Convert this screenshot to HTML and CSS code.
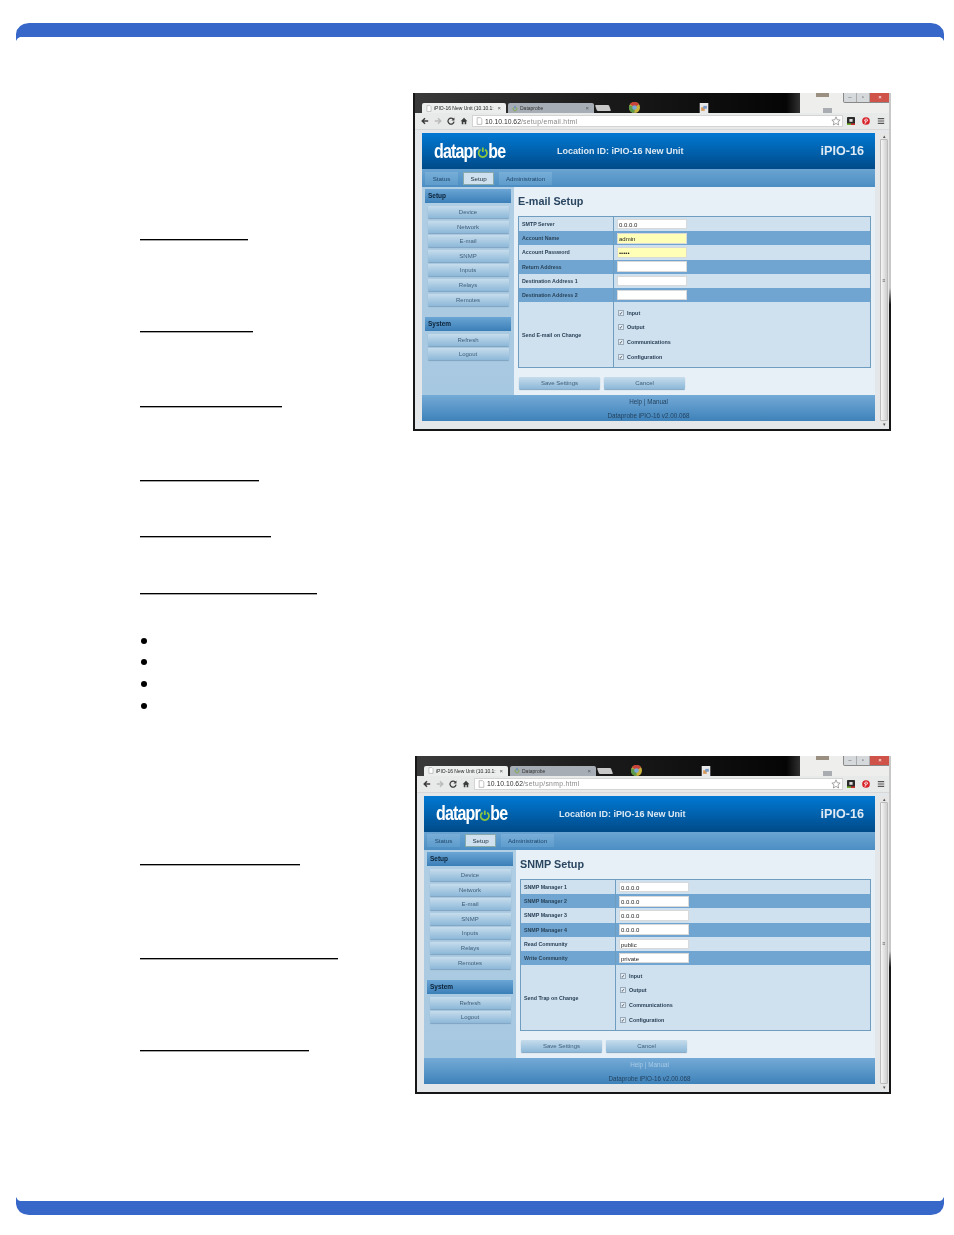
FILE: index.html
```html
<!DOCTYPE html>
<html lang="en">
<head>
<meta charset="utf-8">
<title>iPIO-16 Setup</title>
<link rel="stylesheet" href="styles.css">
</head>
<body>
<svg class="defs" width="0" height="0" aria-hidden="true">
  <symbol id="ic-back" viewBox="0 0 10 10"><path d="M9 5H2M5 1.500 1.500 5 5 8.500" fill="none" stroke="currentColor" stroke-width="1.800"/></symbol>
  <symbol id="ic-reload" viewBox="0 0 10 10"><path d="M8.300 3.200A3.800 3.800 0 1 0 8.800 5.800" fill="none" stroke="currentColor" stroke-width="1.600"/><path d="M9.300 .6V4.400H5.600Z" fill="currentColor"/></symbol>
  <symbol id="ic-home" viewBox="0 0 10 10"><path d="M5 1 .8 5.200H2.200V9.200H4.200V6.400H5.800V9.200H7.800V5.200H9.200Z" fill="currentColor"/></symbol>
  <symbol id="ic-page" viewBox="0 0 10 12"><path d="M1.500 1H6.500L8.500 3V11H1.500Z" fill="#fff" stroke="#999" stroke-width=".9"/></symbol>
  <symbol id="ic-star" viewBox="0 0 12 12"><path d="M6 1 7.500 4.500 11 4.900 8.400 7.200 9.200 10.800 6 8.900 2.800 10.800 3.600 7.200 1 4.900 4.500 4.500Z" fill="#fff" stroke="#888" stroke-width=".9"/></symbol>
  <symbol id="ic-ext" viewBox="0 0 10 10"><rect width="10" height="10" rx="1" fill="#2b2b2b"/><rect x="3" y="2.500" width="4" height="3.500" fill="#ddd"/><rect y="8" width="5" height="2" fill="#6fae2c"/><rect x="5" y="8" width="5" height="2" fill="#c9302c"/></symbol>
  <symbol id="ic-pin" viewBox="0 0 10 10"><circle cx="5" cy="5" r="4.800" fill="#d8232a"/><path d="M3.700 8.500 5 3.800M3.300 5.200C2.600 3 5 1.800 6.400 2.800 7.800 4 6.600 6.600 4.800 5.800" fill="none" stroke="#fff" stroke-width="1"/></symbol>
  <symbol id="ic-menu" viewBox="0 0 10 10"><path d="M1 2H9M1 5H9M1 8H9" stroke="#555" stroke-width="1.500"/></symbol>
  <symbol id="ic-power" viewBox="0 0 12 12" preserveAspectRatio="none"><path d="M3.600 2.700A4.500 4.500 0 1 0 8.400 2.700" fill="none" stroke="#8cc63f" stroke-width="1.900"/><path d="M6 .5V5.500" stroke="#8cc63f" stroke-width="1.900"/></symbol>
  <symbol id="ic-favicon" viewBox="0 0 10 10"><path d="M3 3.200A3.200 3.200 0 1 0 7 3.200" fill="none" stroke="#7ba83a" stroke-width="1.400"/><path d="M5 .5V5" stroke="#3a7cc0" stroke-width="1.400"/></symbol>
  <symbol id="ic-chrome" viewBox="0 0 12 12"><circle cx="6" cy="6" r="6" fill="#c9b23a"/><path d="M6 6 1 2.500A6 6 0 0 1 11 2.500Z" fill="#c8443a"/><path d="M6 6 6 12A6 6 0 0 1 .5 3.500Z" fill="#5b9a4a"/><circle cx="6" cy="6" r="2.500" fill="#7aa6d8"/></symbol>
  <symbol id="ic-doc" viewBox="0 0 12 14"><rect width="12" height="14" fill="#e8e8e8"/><rect x="2" y="6" width="5" height="5" fill="#d89a5a"/><rect x="5" y="4" width="5" height="4" fill="#7a9ac8"/></symbol>
</svg>

<svg class="band" viewBox="0 0 928 18" aria-hidden="true"><path d="M0 18V11Q1 1 13 0H915Q927 1 928 11V18Q927 15 924 14H4Q1 15 0 18Z"/></svg>

<main class="doc">
  <section class="spread spread-a">
    <div class="notes notes-a">
      <span class="rule r108"></span>
      <span class="rule r113"></span>
      <span class="rule r142"></span>
      <span class="rule r119"></span>
      <span class="rule r131"></span>
      <span class="rule r177"></span>
    </div>
    <article class="shot shot-a">
      <div class="strip">
        <div class="tab tab-on"><svg class="tab-ic"><use href="#ic-page"/></svg><span class="tab-t">iPIO-16 New Unit (10.10.1:</span><span class="tab-x">×</span></div>
        <div class="tab"><svg class="tab-ic"><use href="#ic-favicon"/></svg><span class="tab-t">Dataprobe</span><span class="tab-x">×</span></div>
        <div class="tab-new"></div>
        <svg class="deco-chrome"><use href="#ic-chrome"/></svg>
        <svg class="deco-doc"><use href="#ic-doc"/></svg>
        <div class="desk"><i class="bit bit-a"></i><i class="bit bit-b"></i></div>
        <div class="win"><span class="win-b">–</span><span class="win-b">▫</span><span class="win-b win-x">×</span></div>
      </div>
      <div class="bar">
        <svg class="nav-ic ic-dark"><use href="#ic-back"/></svg>
        <svg class="nav-ic ic-fade"><use href="#ic-back"/></svg>
        <svg class="nav-ic ic-dark"><use href="#ic-reload"/></svg>
        <svg class="nav-ic ic-dark"><use href="#ic-home"/></svg>
        <div class="url"><svg class="url-ic"><use href="#ic-page"/></svg><span class="url-h">10.10.10.62</span><span class="url-p">/setup/email.html</span><svg class="url-star"><use href="#ic-star"/></svg></div>
        <svg class="nav-ic nav-r"><use href="#ic-ext"/></svg>
        <svg class="nav-ic nav-r"><use href="#ic-pin"/></svg>
        <svg class="nav-ic nav-r"><use href="#ic-menu"/></svg>
      </div>
      <div class="view">
        <div class="site">
          <header class="hero">
            <div class="logo-box"><div class="logo">datapr<svg class="logo-o"><use href="#ic-power"/></svg>be</div></div>
            <div class="loc">Location ID: iPIO-16 New Unit</div>
            <div class="model">iPIO-16</div>
          </header>
          <nav class="tabs"><a class="nt nt-s">Status</a><a class="nt nt-on">Setup</a><a class="nt nt-a">Administration</a></nav>
          <div class="body">
            <aside class="side">
              <h3 class="side-h">Setup</h3>
              <a class="sb">Device</a><a class="sb">Network</a><a class="sb">E-mail</a><a class="sb">SNMP</a><a class="sb">Inputs</a><a class="sb">Relays</a><a class="sb">Remotes</a>
              <h3 class="side-h side-h2">System</h3>
              <a class="sb">Refresh</a><a class="sb">Logout</a>
            </aside>
            <div class="pane">
              <h2 class="pane-t">E-mail Setup</h2>
              <div class="form">
                <div class="row"><label class="lab">SMTP Server</label><div class="val"><span class="inp">0.0.0.0</span></div></div>
                <div class="row row-d"><label class="lab">Account Name</label><div class="val"><span class="inp inp-y">admin</span></div></div>
                <div class="row"><label class="lab">Account Password</label><div class="val"><span class="inp inp-y">•••••</span></div></div>
                <div class="row row-d"><label class="lab">Return Address</label><div class="val"><span class="inp"></span></div></div>
                <div class="row"><label class="lab">Destination Address 1</label><div class="val"><span class="inp"></span></div></div>
                <div class="row row-d"><label class="lab">Destination Address 2</label><div class="val"><span class="inp"></span></div></div>
                <div class="row row-big"><label class="lab">Send E-mail on Change</label><div class="val val-c">
                  <span class="chk"><i class="box">✓</i>Input</span><span class="chk"><i class="box">✓</i>Output</span><span class="chk"><i class="box">✓</i>Communications</span><span class="chk"><i class="box">✓</i>Configuration</span>
                </div></div>
              </div>
              <div class="acts"><a class="btn">Save Settings</a><a class="btn">Cancel</a></div>
            </div>
          </div>
          <footer class="foot"><span>Help | Manual</span><span>Dataprobe iPIO-16 v2.00.068</span></footer>
        </div>
        <div class="scroll"><i class="sc-cap">▴</i><i class="sc-th">≡</i><i class="sc-cap">▾</i></div>
      </div>
    </article>
  </section>

  <ul class="dots"><li></li><li></li><li></li><li></li></ul>

  <section class="spread spread-b">
    <div class="notes notes-b">
      <span class="rule r160"></span>
      <span class="rule r198"></span>
      <span class="rule r169"></span>
    </div>
    <article class="shot shot-b">
      <div class="strip">
        <div class="tab tab-on"><svg class="tab-ic"><use href="#ic-page"/></svg><span class="tab-t">iPIO-16 New Unit (10.10.1:</span><span class="tab-x">×</span></div>
        <div class="tab"><svg class="tab-ic"><use href="#ic-favicon"/></svg><span class="tab-t">Dataprobe</span><span class="tab-x">×</span></div>
        <div class="tab-new"></div>
        <svg class="deco-chrome"><use href="#ic-chrome"/></svg>
        <svg class="deco-doc"><use href="#ic-doc"/></svg>
        <div class="desk"><i class="bit bit-a"></i><i class="bit bit-b"></i></div>
        <div class="win"><span class="win-b">–</span><span class="win-b">▫</span><span class="win-b win-x">×</span></div>
      </div>
      <div class="bar">
        <svg class="nav-ic ic-dark"><use href="#ic-back"/></svg>
        <svg class="nav-ic ic-fade"><use href="#ic-back"/></svg>
        <svg class="nav-ic ic-dark"><use href="#ic-reload"/></svg>
        <svg class="nav-ic ic-dark"><use href="#ic-home"/></svg>
        <div class="url"><svg class="url-ic"><use href="#ic-page"/></svg><span class="url-h">10.10.10.62</span><span class="url-p">/setup/snmp.html</span><svg class="url-star"><use href="#ic-star"/></svg></div>
        <svg class="nav-ic nav-r"><use href="#ic-ext"/></svg>
        <svg class="nav-ic nav-r"><use href="#ic-pin"/></svg>
        <svg class="nav-ic nav-r"><use href="#ic-menu"/></svg>
      </div>
      <div class="view">
        <div class="site">
          <header class="hero">
            <div class="logo-box"><div class="logo">datapr<svg class="logo-o"><use href="#ic-power"/></svg>be</div></div>
            <div class="loc">Location ID: iPIO-16 New Unit</div>
            <div class="model">iPIO-16</div>
          </header>
          <nav class="tabs"><a class="nt nt-s">Status</a><a class="nt nt-on">Setup</a><a class="nt nt-a">Administration</a></nav>
          <div class="body">
            <aside class="side">
              <h3 class="side-h">Setup</h3>
              <a class="sb">Device</a><a class="sb">Network</a><a class="sb">E-mail</a><a class="sb">SNMP</a><a class="sb">Inputs</a><a class="sb">Relays</a><a class="sb">Remotes</a>
              <h3 class="side-h side-h2">System</h3>
              <a class="sb">Refresh</a><a class="sb">Logout</a>
            </aside>
            <div class="pane">
              <h2 class="pane-t">SNMP Setup</h2>
              <div class="form">
                <div class="row"><label class="lab">SNMP Manager 1</label><div class="val"><span class="inp">0.0.0.0</span></div></div>
                <div class="row row-d"><label class="lab">SNMP Manager 2</label><div class="val"><span class="inp">0.0.0.0</span></div></div>
                <div class="row"><label class="lab">SNMP Manager 3</label><div class="val"><span class="inp">0.0.0.0</span></div></div>
                <div class="row row-d"><label class="lab">SNMP Manager 4</label><div class="val"><span class="inp">0.0.0.0</span></div></div>
                <div class="row"><label class="lab">Read Community</label><div class="val"><span class="inp">public</span></div></div>
                <div class="row row-d"><label class="lab">Write Community</label><div class="val"><span class="inp">private</span></div></div>
                <div class="row row-big"><label class="lab">Send Trap on Change</label><div class="val val-c">
                  <span class="chk"><i class="box">✓</i>Input</span><span class="chk"><i class="box">✓</i>Output</span><span class="chk"><i class="box">✓</i>Communications</span><span class="chk"><i class="box">✓</i>Configuration</span>
                </div></div>
              </div>
              <div class="acts"><a class="btn">Save Settings</a><a class="btn">Cancel</a></div>
            </div>
          </div>
          <footer class="foot"><span class="foot-l">Help | Manual</span><span>Dataprobe iPIO-16 v2.00.068</span></footer>
        </div>
        <div class="scroll"><i class="sc-cap">▴</i><i class="sc-th">≡</i><i class="sc-cap">▾</i></div>
      </div>
    </article>
  </section>
</main>

<svg class="band band-b" viewBox="0 0 928 18" aria-hidden="true"><path d="M0 18V11Q1 1 13 0H915Q927 1 928 11V18Q927 15 924 14H4Q1 15 0 18Z"/></svg>
</body>
</html>
```
FILE: styles.css
```css
* { box-sizing: border-box; }
html, body { margin: 0; padding: 0; background: #fff; }
body { height: 1235px; overflow: hidden; padding-top: 23px; font-family: "Liberation Sans", Arial, sans-serif; }
.defs { position: absolute; }
a { text-decoration: none; color: inherit; }
h2, h3 { margin: 0; }

.band { display: block; width: 928px; height: 18px; margin-left: 16px; fill: #3767c8; }
.band-b { transform: scaleY(-1); margin-top: 103px; }

.doc { padding-top: 52px; }
.spread { display: flex; align-items: flex-start; padding-left: 140px; }
.spread-a .notes { width: 273px; }
.spread-b { margin-top: 39.600px; }
.spread-b .notes { width: 275px; }
.notes { display: grid; justify-items: start; align-items: end; }
.notes-a { grid-template-rows: 147px 92px 75px 74px 56px 57px; }
.notes-b { grid-template-rows: 109px 94px 92px; }
.rule { display: block; height: 1px; background: #000; box-shadow: 0 1px 0 rgba(0, 0, 0, .35); }
.r108 { width: 108px; } .r113 { width: 113px; } .r142 { width: 142px; } .r119 { width: 119px; }
.r131 { width: 131px; } .r177 { width: 177px; } .r160 { width: 160px; } .r198 { width: 198px; } .r169 { width: 169px; }

.dots { list-style: none; margin: 36px 0 0; padding: 0 0 0 141px; width: 200px; }
.dots li { height: 21.600px; display: flex; align-items: center; }
.dots li::before { content: ""; width: 6px; height: 6px; border-radius: 50%; background: #000; }

/* screenshot */
.shot { position: relative; height: 338px; display: flex; flex-direction: column; background: #e9eaea; border-left: 2px solid #161616; border-bottom: 2px solid #161616; filter: blur(.35px); overflow: hidden; }
.shot::after { content: ""; position: absolute; top: 0; right: 0; bottom: 0; width: 2px; background: linear-gradient(#c8c8c8 0, #c8c8c8 58%, #161616 63%); }
.shot-a { width: 478px; }
.shot-b { width: 476px; }

.strip { position: relative; height: 20px; flex: none; display: flex; align-items: flex-end; padding-left: 7px; gap: 2px; background: linear-gradient(90deg, #3a3a3a 0, #1a1a1a 40%, #050505 78%, #333 81%); }
.tab { width: 86px; height: 10px; display: flex; align-items: center; gap: 2px; padding: 0 5px 0 4px; background: #a6adb4; font-size: 5px; color: #333; border-radius: 2px 2px 0 0; }
.tab-on { background: #eceded; color: #222; width: 84px; }
.tab-ic { width: 6px; height: 7px; flex: none; }
.tab-t { flex: 1; white-space: nowrap; overflow: hidden; }
.tab-x { font-size: 6px; color: #555; }
.tab-new { width: 14px; height: 6px; margin-bottom: 2px; background: #c8c8c8; border-radius: 1px; transform: skewX(20deg); }
.deco-chrome { position: absolute; left: 213px; top: 9px; width: 13px; height: 11px; }
.deco-doc { position: absolute; left: 283px; top: 10px; width: 12px; height: 10px; }
.desk { position: absolute; right: 0; top: 0; width: 91px; height: 20px; background: #eeeeec; }
.bit { position: absolute; display: block; background: #9a8f80; }
.bit-a { left: 16px; top: 0; width: 13px; height: 4px; }
.bit-b { left: 23px; top: 15px; width: 9px; height: 5px; background: #a9acb0; }
.win { position: absolute; right: 0; top: 0; width: 48px; height: 10px; display: flex; border: 1px solid #888; border-top: 0; border-radius: 0 0 2px 2px; background: #d6d9dc; font-size: 6px; line-height: 8px; text-align: center; color: #555; }
.win-b { flex: 1; border-right: 1px solid #aaa; }
.win-x { flex: 1.700; background: #d0534a; color: #fff; border: 0; }

.bar { height: 17px; flex: none; display: flex; align-items: center; gap: 1px; padding: 0 3px 0 4px; background: #e8e9e9; border-bottom: 1px solid #d8d8d8; }
.nav-ic { width: 8px; height: 8px; flex: none; margin: 0 2px; color: #555; }
.nav-r { margin: 0 3px; }
.ic-dark { color: #3c3c3c; }
.ic-fade { color: #bbb; transform: scaleX(-1); }
.url { flex: 1; height: 12px; margin-left: 1px; display: flex; align-items: center; background: #fff; border: 1px solid #d4d4d4; padding: 0 1px 0 3px; font-size: 6.800px; white-space: nowrap; }
.url-ic { width: 7px; height: 8px; flex: none; margin-right: 2px; }
.url-h { color: #333; }
.url-p { color: #888; flex: 1; letter-spacing: .3px; }
.url-star { width: 10px; height: 10px; flex: none; }

.view { flex: 1; display: flex; min-height: 0; padding-left: 7px; background: #e4e7e9; }
.site { flex: none; width: 453px; margin: 3px 0 8px; display: flex; flex-direction: column; }
.shot-b .site { width: 451px; }
.scroll { flex: none; width: 10px; margin: 3px 0 2px 4px; display: flex; flex-direction: column; align-items: center; background: #e6e6e6; color: #555; font-size: 5px; }
.sc-cap { flex: none; height: 6px; font-style: normal; line-height: 6px; }
.sc-th { flex: 1; width: 8px; font-style: normal; display: flex; align-items: center; justify-content: center; background: linear-gradient(90deg, #f6f6f6, #cfcfcf); border: 1px solid #bbb; border-radius: 1px; font-size: 5px; }

.hero { height: 36px; flex: none; display: flex; align-items: center; padding: 0 11px 0 12px; color: #e9f2fa; background: linear-gradient(#0079d3, #004a88); }
.logo-box { width: 123px; flex: none; }
.logo { font-size: 20px; font-weight: 700; letter-spacing: -1.050px; color: #fff; white-space: nowrap; display: flex; align-items: center; transform: scaleX(.8); transform-origin: left center; }
.logo-o { width: 14px; height: 11px; margin: 3px -.5px 0 -.5px; flex: none; }
.loc { flex: 1; font-size: 9px; font-weight: 700; color: #dbe8f3; }
.model { font-size: 12.600px; font-weight: 700; color: #dfeaf4; }

.tabs { height: 18px; flex: none; display: flex; align-items: center; padding: 0 0 0 3px; gap: 5px; background: linear-gradient(#6aa4d2, #4c8ec3); }
.nt { height: 13px; display: flex; align-items: center; justify-content: center; font-size: 6.200px; color: #1f4568; background: linear-gradient(#78aed8, #5e9ccc); }
.nt-s { width: 33px; }
.nt-on { width: 31px; background: #cfe0ee; border: 1px solid #8aa; color: #234; }
.nt-a { width: 53px; }

.body { flex: 1; display: flex; min-height: 0; }
.side { width: 92px; flex: none; padding: 2px 3px 0; background: linear-gradient(#b0cee4, #a7c8e1); display: flex; flex-direction: column; align-items: center; }
.side-h { width: 100%; height: 14px; flex: none; font-size: 6.500px; line-height: 14px; padding-left: 3px; color: #0c2338; background: linear-gradient(#6aa5d4, #3b7fb8); }
.side-h2 { margin-top: 11px; }
.sb { width: 81px; height: 12px; flex: none; margin-top: 2.600px; display: flex; align-items: center; justify-content: center; font-size: 6px; color: #3f5e7a; background: linear-gradient(#c6dcec, #8db8d9); box-shadow: 0 1px 1px #7fa3c0; border-radius: 1px; }
.side-h + .sb { margin-top: 3px; }
.pane { flex: 1; min-width: 0; padding: 8px 4px 0; background: #e8f0f7; }
.pane-t { font-size: 10.800px; line-height: 13px; color: #2a4660; margin: 0 0 8px 0; }
.form { border: 1px solid #6e9dc0; }
.row { display: flex; height: 14.200px; background: #cfe0ee; }
.row-d { background: #6fa5d0; }
.row-big { height: 65px; }
.lab { width: 95px; flex: none; display: flex; align-items: center; padding-left: 3px; font-size: 5.300px; font-weight: 700; color: #2a4258; white-space: nowrap; border-right: 1px solid #6e9dc0; }
.val { flex: 1; display: flex; align-items: center; padding-left: 3px; }
.val-c { flex-direction: column; align-items: flex-start; justify-content: space-between; padding: 6px 0 6px 4px; }
.inp { width: 70px; height: 10.500px; display: block; padding-left: 1px; line-height: 10.500px; font-size: 6px; color: #222; background: #fff; border: 1px solid #d9d9d9; }
.inp-y { background: #ffffb8; }
.chk { display: flex; align-items: center; gap: 3px; font-size: 5.400px; font-weight: 700; color: #2a4258; height: 9px; }
.box { width: 6px; height: 6px; flex: none; background: #e6edf2; border: 1px solid #9ab; font-size: 5px; line-height: 5px; font-style: normal; text-align: center; color: #456; }
.acts { display: flex; gap: 4px; padding: 9px 0 0 1px; }
.btn { width: 81px; height: 12px; display: flex; align-items: center; justify-content: center; font-size: 6px; color: #3f5e7a; background: linear-gradient(#c6dcec, #8db8d9); box-shadow: 0 1px 1px #7fa3c0; border-radius: 1px; }
.foot { height: 26px; flex: none; display: flex; flex-direction: column; align-items: center; justify-content: space-between; padding: 3px 0 2px; font-size: 6.300px; color: #24425e; background: linear-gradient(#74aad6, #3e82ba); }
.foot-l { color: #a8cbe6; }
```
